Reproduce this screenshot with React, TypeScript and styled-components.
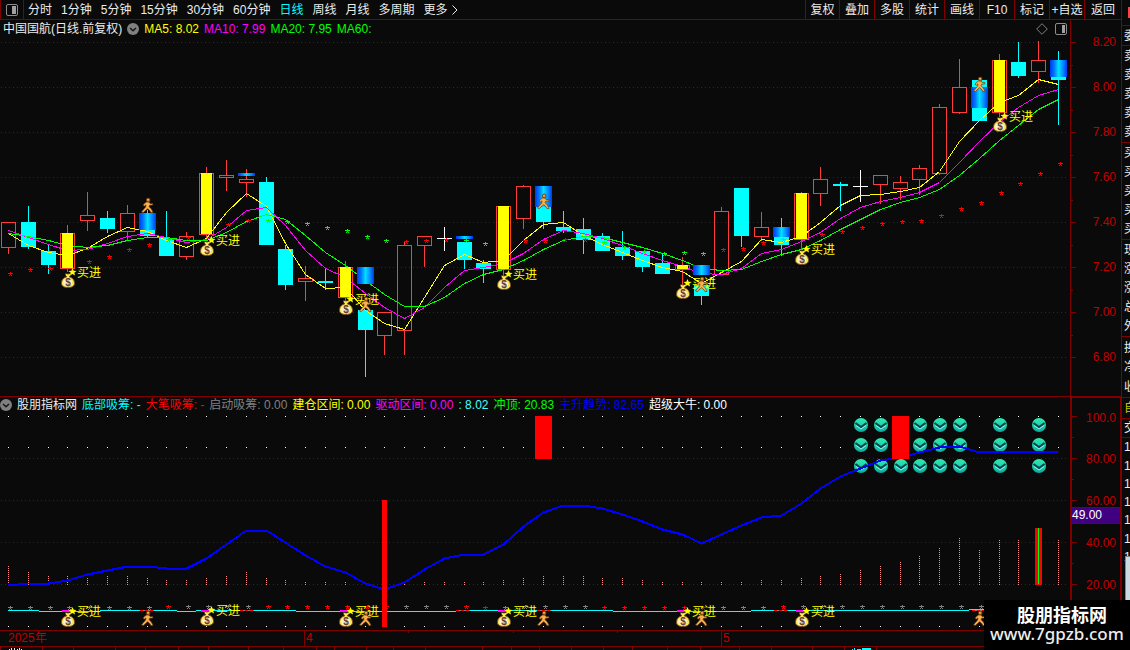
import React from "react";
import styled, { createGlobalStyle, css } from "styled-components";

const RULE = "#800000";
const BG = "#0a0a0a";

const Global = createGlobalStyle`
  * { box-sizing: border-box; }
  html, body { margin: 0; background: ${BG}; }
  body {
    font-family: "Liberation Sans", "Noto Sans CJK SC", sans-serif;
    font-size: 12px;
    color: #ececec;
  }
  svg { display: block; }
`;

/* ---------- layout ---------- */

const Page = styled.div`
  position: relative;
  display: flex;
  min-height: 100vh;
  overflow: hidden;
  background: ${BG};
`;

const Main = styled.main`
  flex: 1;
  min-width: 0;
  display: flex;
  flex-direction: column;
`;

const Toolbar = styled.header`
  display: flex;
  height: 20px;
  border-bottom: 1px solid ${RULE};
`;

const resetButton = css`
  padding: 0;
  border: 0;
  background: none;
  color: inherit;
  font: inherit;
  line-height: 18px;
  white-space: nowrap;
`;

const LayoutToggle = styled.button`
  ${resetButton}
  display: flex;
  align-items: center;
  justify-content: center;
  width: 24px;
  border-left: 1px solid ${RULE};
  border-right: 1px solid ${RULE};
`;

const Periods = styled.nav`
  flex: 1;
  display: flex;
  gap: 9px;
  padding-left: 4px;
`;

const PeriodButton = styled.button<{ $active?: boolean }>`
  ${resetButton}
  display: flex;
  align-items: center;
  gap: 4px;
  color: ${(p) => (p.$active ? "#00ffff" : "#ececec")};
`;

const Tools = styled.div`
  display: flex;
`;

const ToolButton = styled.button`
  ${resetButton}
  width: 35px;
  border-left: 1px solid ${RULE};
  &:first-child { width: 34px; }
  &:last-child { width: 37px; }
`;

const Pane = styled.section<{ $ruled?: boolean }>`
  display: flex;
  border-top: ${(p) => (p.$ruled ? `1px solid ${RULE}` : "0")};
`;

const Plot = styled.div`
  flex: 1;
  min-width: 0;
`;

const Legend = styled.div<{ $height: number; $indent?: number }>`
  display: flex;
  align-items: center;
  gap: 5px;
  height: ${(p) => p.$height}px;
  padding: 0 3px 0 ${(p) => p.$indent || 0}px;
  line-height: 16px;
  white-space: nowrap;
`;

const LegendItem = styled.span<{ $color: string }>`
  color: ${(p) => p.$color};
`;

const LegendTools = styled.div`
  display: flex;
  align-items: center;
  gap: 7px;
  margin-left: auto;
`;

const Drawing = styled.svg<{ $height: number }>`
  width: 100%;
  height: ${(p) => p.$height}px;
`;

const Axis = styled.aside<{ $boxed?: boolean }>`
  position: relative;
  display: flex;
  width: 51px;
  border-left: ${(p) => (p.$boxed ? 2 : 1)}px solid ${RULE};
  ${(p) => p.$boxed && css`
    border-top: 1px solid ${RULE};
    border-right: 1px solid ${RULE};
  `}
`;

const AxisLabels = styled.div<{ $boxed?: boolean }>`
  flex: 1;
  padding-right: ${(p) => (p.$boxed ? 4 : 5)}px;
  color: #c00000;
  text-align: right;
`;

const AxisLabel = styled.div<{ $height: number }>`
  height: ${(p) => p.$height}px;
  line-height: ${(p) => p.$height}px;
`;

const CurrentValue = styled.div`
  position: absolute;
  top: 109px;
  left: 0;
  right: 0;
  height: 17px;
  border-top: 1px solid ${RULE};
  border-bottom: 1px solid ${RULE};
  background: #400080;
  color: #ffffff;
  line-height: 15px;
`;

const DateRow = styled.div`
  display: grid;
  grid-template-columns: 304fr 417fr 400fr;
  height: 17px;
  border-top: 1px solid ${RULE};
  border-bottom: 1px solid ${RULE};
  color: #c00000;
  line-height: 15px;
`;

const Month = styled.div<{ $first?: boolean }>`
  position: relative;
  padding-left: ${(p) => (p.$first ? 8 : 1)}px;
  border-left: ${(p) => (p.$first ? "0" : `1px solid ${RULE}`)};
`;

const Weeks = styled.div`
  position: absolute;
  inset: 0 0 auto 0;
  display: flex;
  height: 2px;
`;

const Week = styled.span`
  flex: 1;
  & + & { border-left: 1px solid ${RULE}; }
`;

const TabStrip = styled.div`
  display: flex;
  flex: 1;
  min-height: 3px;
`;

const TabEdge = styled.span<{ $size: number }>`
  flex: ${(p) => p.$size} 0 0;
  border-left: 1px solid ${RULE};
`;

const Quotes = styled.aside`
  display: flex;
  flex-direction: column;
  width: 9px;
  overflow: hidden;
  border-left: 1px solid ${RULE};
`;

const QuoteGroup = styled.ul<{ $height: number; $color?: string }>`
  display: flex;
  flex-direction: column;
  justify-content: space-evenly;
  flex: none;
  height: ${(p) => p.$height}px;
  margin: 0;
  padding: 0 0 0 2px;
  border-bottom: 1px solid ${RULE};
  color: ${(p) => p.$color || "#ececec"};
  line-height: 18px;
  list-style: none;
  white-space: nowrap;
  &:last-of-type { border-bottom: 0; }
`;

const QuoteTop = styled.div`
  flex: none;
  height: 26px;
  padding: 7px 0 0 6px;
  border-bottom: 1px solid ${RULE};
`;

const RedMark = styled.div`
  height: 11px;
  background: #ff4040;
`;

const Thumb = styled.div`
  position: absolute;
  right: 0;
  top: 556px;
  width: 5px;
  height: 46px;
  border: 1px solid #7d8a92;
  border-right: 0;
  background: #cbdbe4;
`;

const Brand = styled.footer`
  position: absolute;
  right: 0;
  top: 600px;
  width: 146px;
  height: 50px;
  padding: 2px 0 0 10px;
  background: #000000;
  text-align: center;
  white-space: nowrap;
`;

const BrandName = styled.div`
  font-family: "Noto Sans CJK SC", sans-serif;
  font-size: 18px;
  font-weight: 700;
  line-height: 24px;
  color: #ffffff;
`;

const BrandLink = styled.a`
  display: block;
  margin-left: -4px;
  color: #ececec;
  font-family: "Noto Sans", sans-serif;
  font-size: 17px;
  font-weight: 500;
  line-height: 16px;
  text-align: left;
  text-decoration: none;
`;

/* ---------- data ---------- */

// centre column of each trading day
const cx = (i: number) => Math.floor(8.487 + 19.813 * i);

type Kind = "r" | "c" | "y" | "w";
type Candle = [Kind, number, number, number, number];

// kind, high, body top, body bottom, low
const candles: Candle[] = [
  ["r", 222, 222, 247, 254], ["c", 206, 222, 247, 249], ["c", 245, 251, 265, 274],
  ["y", 225, 233, 268, 272], ["r", 192, 215, 220, 231], ["c", 211, 218, 229, 233],
  ["r", 205, 213, 231, 240], ["c", 210, 213, 236, 238], ["c", 211, 238, 256, 256],
  ["r", 232, 236, 256, 260], ["y", 167, 173, 234, 240], ["r", 160, 175, 177, 191],
  ["r", 169, 179, 182, 197], ["c", 177, 182, 245, 245], ["c", 245, 249, 285, 290],
  ["r", 266, 278, 281, 301], ["c", 268, 281, 283, 290], ["y", 261, 267, 297, 301],
  ["c", 310, 310, 330, 377], ["r", 312, 312, 335, 355], ["r", 242, 245, 330, 355],
  ["r", 236, 236, 245, 267], ["w", 227, 238, 239, 251], ["c", 242, 242, 260, 269],
  ["c", 260, 263, 269, 283], ["y", 206, 206, 269, 276], ["r", 185, 186, 218, 229],
  ["c", 186, 186, 222, 229], ["c", 211, 227, 231, 233], ["c", 218, 229, 240, 254],
  ["c", 233, 236, 251, 251], ["c", 231, 247, 256, 260], ["c", 251, 251, 267, 272],
  ["c", 254, 263, 274, 274], ["y", 257, 265, 269, 286], ["c", 285, 285, 296, 305],
  ["r", 207, 211, 274, 274], ["c", 188, 188, 236, 247], ["r", 212, 227, 236, 241],
  ["c", 218, 227, 245, 256], ["y", 192, 193, 239, 250], ["r", 167, 179, 193, 206],
  ["c", 182, 184, 186, 211], ["w", 170, 186, 187, 202], ["r", 175, 175, 184, 204],
  ["r", 176, 182, 188, 200], ["r", 165, 168, 179, 195], ["r", 104, 107, 173, 175],
  ["r", 59, 87, 112, 114], ["c", 80, 80, 121, 121], ["y", 54, 60, 112, 117],
  ["c", 42, 62, 76, 78], ["r", 41, 60, 71, 83], ["c", 51, 60, 80, 125],
];

const blueBars: [number, number, number][] = [
  [7, 213, 230], [12, 173, 176], [18, 267, 284], [23, 236, 239], [27, 186, 207],
  [35, 265, 275], [39, 227, 237], [49, 87, 108], [53, 60, 77],
];

const ma5 = [233, 245, 252, 255, 248, 236, 227, 231, 240, 247, 238, 212, 193, 206, 243, 274, 288, 287, 310, 323, 329, 297, 265, 254, 262, 260, 240, 224, 222, 235, 244, 252, 260, 267, 271, 283, 272, 261, 239, 242, 236, 222, 205, 195, 194, 191, 187, 171, 141, 120, 102, 95, 79, 84];
const ma10 = [230, 237, 244, 250, 249, 243, 236, 233, 237, 242, 239, 227, 210, 207, 225, 250, 268, 277, 293, 307, 318, 307, 287, 270, 267, 263, 253, 239, 230, 233, 238, 245, 253, 260, 266, 273, 274, 268, 253, 249, 241, 232, 218, 207, 201, 197, 192, 182, 162, 141, 122, 107, 95, 89];
const ma20 = [233, 236, 240, 245, 247, 245, 240, 237, 237, 240, 240, 232, 221, 214, 219, 235, 252, 265, 280, 294, 306, 306, 297, 283, 274, 269, 260, 249, 240, 236, 237, 242, 247, 253, 260, 268, 270, 269, 261, 254, 249, 240, 229, 219, 209, 202, 197, 189, 175, 158, 140, 125, 109, 99];

// y of each trend star; 0 leaves the bar unmarked
const starY = [274, 270, 269, 0, 262, 257, 250, 245, 240, 238, 0, 225, 221, 221, 222, 224, 228, 231, 237, 241, 242, 241, 240, 241, 244, 0, 241, 241, 240, 240, 243, 248, 252, 254, 253, 254, 250, 249, 243, 240, 0, 235, 232, 228, 224, 222, 221, 216, 209, 203, 193, 184, 174, 164];
// days on which the trend turns down
const weakDays = [8, 13, 14, 15, 16, 17, 18, 19, 23, 24, 30, 31, 32, 33, 34, 35, 39];

const trend = [585, 583, 583, 580, 574, 570, 566, 566, 568, 568, 558, 544, 530, 530, 542, 555, 566, 572, 583, 589, 582, 569, 558, 554, 554, 544, 526, 512, 505, 505, 508, 514, 521, 529, 534, 543, 534, 525, 517, 515, 503, 488, 476, 468, 460, 457, 452, 447, 446, 452, 451, 451, 451, 452];
const volumeTop = [565, 571, 575, 575, 577, 576, 575, 577, 579, 579, 577, 575, 572, 577, 580, 581, 582, 582, 583, 0, 584, 582, 581, 581, 581, 579, 577, 576, 576, 576, 577, 578, 580, 581, 582, 582, 581, 581, 580, 580, 578, 575, 573, 570, 566, 562, 555, 547, 537, 549, 540, 540, 0, 540];

const buys: [number, number][] = [[3, 281], [10, 249], [17, 308], [25, 283], [34, 292], [40, 258], [50, 125]];
const exits: [number, number][] = [[7, 205], [18, 304], [27, 201], [35, 284], [49, 84]];

const baseline: [number, number, number][] = [
  [8, 39, 610], [39, 100, 611], [100, 177, 610], [177, 196, 611], [196, 296, 610],
  [296, 456, 611], [456, 613, 610], [613, 751, 611], [751, 969, 610], [969, 984, 609],
];
const dashes = [140, 240, 456, 537, 774, 972];

/* ---------- drawing parts ---------- */

const linePoints = (ys: number[]) => ys.map((y, i) => `${cx(i) + 0.5},${y + 0.5}`).join(" ");

const DottedRule = ({ y }: { y: number }) => (
  <line x1="1" x2="1067" y1={y + 0.5} y2={y + 0.5} stroke="#780808" strokeDasharray="1 3" shapeRendering="crispEdges" />
);

const Star = ({ x, y, color }: { x: number; y: number; color: string }) => (
  <path
    transform={`translate(${x} ${y})`}
    fill={color}
    shapeRendering="crispEdges"
    d="M0-2h1v1h2v1H1v1h1v1H1V1H0v1h-1V1h1V0h-2v-1h2z"
  />
);

const CandleBody = ({ i, candle }: { i: number; candle: Candle }) => {
  const [kind, high, top, bottom, low] = candle;
  const x = cx(i);
  const color = kind === "c" ? "#00ffff" : kind === "w" ? "#ffffff" : "#ff3c3c";
  return (
    <g shapeRendering="crispEdges">
      {high < top && <rect x={x} y={high} width="1" height={top - high} fill={color} />}
      {low > bottom && <rect x={x} y={bottom} width="1" height={low - bottom} fill={color} />}
      {kind === "c" || kind === "w" ? (
        <rect x={x - 7} y={top} width="15" height={bottom - top} fill={color} />
      ) : (
        <rect x={x - 6.5} y={top + 0.5} width="14" height={bottom - top} fill="none" stroke={color} />
      )}
    </g>
  );
};

const Buy = ({ i, y }: { i: number; y: number }) => (
  <g transform={`translate(${cx(i) + 1} ${y})`}>
    <path d="M-2.500-7h5l-1 3c4 1 5 4 5 6.500C6.500 5 4 6.500 0 6.500S-6.500 5-6.500 2.500C-6.500 0-5.500-3-1.500-4z" fill="#f7e65a" stroke="#7a4a1c" />
    <ellipse cx="-0.500" cy="1.500" rx="4.500" ry="4" fill="#fff3c8" />
    <path d="M-2.500-7.500 0-6l2.500-1.500L1.500-5h-3z" fill="#ffef50" />
    <text x="0" y="5" textAnchor="middle" fontSize="10" fontWeight="700" fill="#6b3a2a">$</text>
    <path d="M4.500-13 5.700-10.300 8.500-10 6.300-8.200 7-5.500 4.500-7 2-5.500 2.700-8.200 .5-10 3.300-10.300z" fill="#ffff00" />
    <text x="9" y="-4" fontSize="12" fill="#ffff00">买进</text>
  </g>
);

const Runner = ({ i, y }: { i: number; y: number }) => (
  <g transform={`translate(${cx(i) + 0.5} ${y + 0.5})`}>
    <path
      d="M-.8-3.600h2.300l1.300 1.800 2.300-.3.300 1.500-3.300.4-.5 1.400 2.200 2.200 1.800 3.400-2 .4-1.800-2.600L.2 3.200l-2.700 2.200-1.700 1.700-1.800-.7 1.800-2.200 2.400-2.600.2-2.200-1.500 1.200-1.400-.8 1.600-2z"
      fill="#f8b050"
      stroke="#6a3408"
      strokeWidth="0.700"
    />
    <circle cx="0.700" cy="-5.500" r="1.900" fill="#c87828" stroke="#6a3408" strokeWidth="0.700" />
    <circle cx="0.500" cy="-5.800" r="0.800" fill="#ffc870" />
  </g>
);

const Orb = ({ i, y }: { i: number; y: number }) => (
  <g transform={`translate(${cx(i) + 1} ${y})`}>
    <circle r="7" fill="url(#orb)" />
    <path d="M-5.500-2 0 2 5.500-2" fill="none" stroke="#064458" strokeWidth="2" />
    <path d="M-5 .5 0 4 5 .5" fill="none" stroke="#a0ece4" />
  </g>
);

const PanelIcon = ({ flip }: { flip?: boolean }) => (
  <svg width="12" height="12" viewBox="0 0 12 12" aria-hidden="true">
    <rect x="0.500" y="0.500" width="11" height="11" rx="1.500" fill="none" stroke="#8c8c8c" />
    <rect x={flip ? 7 : 6} y="2" width={flip ? 3 : 4} height="8" fill="#a0a0a0" />
  </svg>
);

const Chevron = () => (
  <svg width="12" height="12" viewBox="0 0 12 12" aria-hidden="true">
    <circle cx="6" cy="6" r="6" fill="#808080" />
    <path d="M3 5 6 7.800 9 5" fill="none" stroke="#151515" strokeWidth="1.500" />
  </svg>
);

const PriceChart = () => (
  <Drawing $height={358} viewBox="0 38 1070 358" role="img" aria-label="中国国航 日线">
    <defs>
      <linearGradient id="blue">
        <stop offset="0" stopColor="#0038f0" />
        <stop offset="0.250" stopColor="#0078ff" />
        <stop offset="0.500" stopColor="#00e0ff" />
        <stop offset="0.750" stopColor="#0090ff" />
        <stop offset="1" stopColor="#0038f0" />
      </linearGradient>
    </defs>
    {[42, 87, 132, 177, 222, 267, 312, 357].map((y) => <DottedRule key={y} y={y} />)}
    {candles.map((c, i) => <CandleBody key={i} i={i} candle={c} />)}
    <g fill="none" shapeRendering="crispEdges">
      <polyline points={linePoints(ma5)} stroke="#ffff00" />
      <polyline points={linePoints(ma10)} stroke="#ff00ff" />
      <polyline points={linePoints(ma20)} stroke="#00ff00" />
    </g>
    {starY.map((y, i) => y > 0 && (
      <Star key={i} x={cx(i) + 2} y={y} color={weakDays.includes(i) ? "#00ff00" : "#ff0000"} />
    ))}
    {candles.map(([kind, , top, bottom], i) => kind === "y" && (
      <rect key={i} x={cx(i) - 5} y={top} width="11" height={bottom - top} fill="#ffff00" shapeRendering="crispEdges" />
    ))}
    {blueBars.map(([i, top, bottom]) => (
      <rect key={i} x={cx(i) - 8} y={top} width="17" height={bottom - top} fill="url(#blue)" />
    ))}
    {buys.map(([i, y]) => <Buy key={i} i={i} y={y} />)}
    {exits.map(([i, y]) => <Runner key={i} i={i} y={y} />)}
  </Drawing>
);

const orbColumns = [43, 44, 46, 47, 48, 50, 52];

const IndicatorChart = () => (
  <Drawing $height={217} viewBox="0 413 1070 217" role="img" aria-label="股朋指标网">
    <defs>
      <linearGradient id="orb" x1="0" y1="0" x2="0" y2="1">
        <stop offset="0" stopColor="#30e8b0" />
        <stop offset="0.450" stopColor="#20d8a8" />
        <stop offset="1" stopColor="#08a8a0" />
      </linearGradient>
    </defs>
    {[458, 500, 542, 584].map((y) => <DottedRule key={y} y={y} />)}
    {candles.map((_, i) => (
      <g key={i} fill="#ffffff" shapeRendering="crispEdges">
        {[416, 447, 626].map((y) => <rect key={y} x={cx(i)} y={y} width="1" height="1" />)}
      </g>
    ))}
    {volumeTop.map((y, i) => y > 0 && (
      <line key={i} x1={cx(i) + 0.5} x2={cx(i) + 0.5} y1="585" y2={y} stroke="#ff8c8c" strokeDasharray="1 1" shapeRendering="crispEdges" />
    ))}
    {[425, 445].map((y) => orbColumns.map((i) => <Orb key={`${i}-${y}`} i={i} y={y} />))}
    {[...orbColumns, 45].map((i) => <Orb key={i} i={i} y={466} />)}
    <polyline points={linePoints(trend)} fill="none" stroke="#0000ff" strokeWidth="2" shapeRendering="crispEdges" />
    <g fill="#ff0000" shapeRendering="crispEdges">
      <rect x={cx(27) - 8} y="416" width="17" height="43" />
      <rect x={cx(45) - 8} y="416" width="17" height="43" />
      <rect x={cx(52) - 3} y="528" width="7" height="57" />
      <rect x={cx(52)} y="528" width="1" height="56" fill="#00ff00" />
    </g>
    {candles.map((_, i) => (
      <Star
        key={i}
        x={cx(i) + 2}
        y={i < 8 || i === 24 || i === 25 || (i > 29 && i < 39) ? 608 : 607}
        color={weakDays.includes(i) ? "#ff0000" : "#808080"}
      />
    ))}
    <g shapeRendering="crispEdges">
      {baseline.map(([from, to, y]) => <rect key={from} x={from} y={y} width={to - from} height="1" fill="#00ffff" />)}
      {dashes.map((x) => (
        <g key={x}>
          <rect x={x} y="610" width="14" height="1" fill="#808080" />
          <line x1={x} x2={x + 14} y1="610.500" y2="610.500" stroke="#ff0000" strokeDasharray="3 2" />
        </g>
      ))}
      {buys.slice(0, 6).map(([i]) => <rect key={i} x={cx(i) - 5} y="610" width="12" height="2" fill="#ff00ff" />)}
      <rect x={cx(19) - 2} y="500" width="5" height="127" fill="#ff0000" />
    </g>
    {buys.slice(0, 6).map(([i]) => <Buy key={i} i={i} y={i === 10 ? 619 : 620} />)}
    {exits.map(([i]) => <Runner key={i} i={i} y={618} />)}
  </Drawing>
);

const AxisTicks = ({ top, height, major, step, count }: { top: number; height: number; major: number; step: number; count: number }) => (
  <svg width="5" height={height} viewBox={`0 ${top} 5 ${height}`} shapeRendering="crispEdges" aria-hidden="true">
    {Array.from({ length: count }, (_, n) => (
      <g key={n} fill={RULE}>
        <rect y={major + n * step} width="5" height="1" />
        {n < count - 1 && <rect y={major + n * step + Math.ceil(step / 2)} width="2" height="1" />}
      </g>
    ))}
  </svg>
);

/* ---------- page ---------- */

const periods = ["分时", "1分钟", "5分钟", "15分钟", "30分钟", "60分钟", "日线", "周线", "月线", "多周期"];
const tools = ["复权", "叠加", "多股", "统计", "画线", "F10", "标记", "+自选", "返回"];
const averages: [string, string][] = [
  ["MA5: 8.02", "#ffff00"], ["MA10: 7.99", "#ff00ff"], ["MA20: 7.95", "#00ff00"], ["MA60:", "#00ff00"],
];
const readings: [string, string][] = [
  ["股朋指标网", "#ececec"], ["底部吸筹: -", "#00ffff"], ["大笔吸筹: -", "#ff0000"], ["启动吸筹: 0.00", "#808080"],
  ["建仓区间: 0.00", "#ffff00"], ["驱动区间: 0.00", "#ff00ff"], [": 8.02", "#40ffff"], ["冲顶: 20.83", "#00ff00"],
  ["主升趋势: 82.65", "#0000ff"], ["超级大牛: 0.00", "#ffffff"],
];
const quoteGroups: { rows: string[]; height: number; color?: string }[] = [
  { rows: ["委"], height: 20 },
  { rows: ["卖", "卖", "卖", "卖", "卖"], height: 97 },
  { rows: ["买", "买", "买", "买", "买"], height: 97 },
  { rows: ["现", "涨", "涨", "总", "外"], height: 97 },
  { rows: ["换", "净", "收"], height: 61 },
  { rows: ["自"], height: 21, color: "#c8c800" },
  { rows: ["交"], height: 19 },
  { rows: ["1", "1", "1", "1", "1", "1", "1"], height: 128 },
];
const tabEdges = [0, 42, 73, 115, 144, 177, 207, 247, 282, 315, 332, 364, 390, 422, 480, 508, 536, 568, 599, 628, 663, 696, 735, 766, 807, 839, 871, 1121];

export default function App() {
  return (
    <>
      <Global />
      <Page>
        <Main>
          <Toolbar>
            <LayoutToggle aria-label="布局"><PanelIcon /></LayoutToggle>
            <Periods>
              {periods.map((p) => <PeriodButton key={p} $active={p === "日线"}>{p}</PeriodButton>)}
              <PeriodButton>
                更多
                <svg width="6" height="10" viewBox="0 0 6 10" aria-hidden="true">
                  <path d="M.5.5 5 5 .5 9.500" fill="none" stroke="#ececec" />
                </svg>
              </PeriodButton>
            </Periods>
            <Tools>{tools.map((t) => <ToolButton key={t}>{t}</ToolButton>)}</Tools>
          </Toolbar>

          <Pane>
            <Plot>
              <Legend $height={18} $indent={3}>
                <LegendItem $color="#ececec">中国国航(日线.前复权)</LegendItem>
                <Chevron />
                {averages.map(([text, color]) => <LegendItem key={text} $color={color}>{text}</LegendItem>)}
                <LegendTools>
                  <svg width="12" height="12" viewBox="0 0 12 12" aria-hidden="true">
                    <path d="M6 .7 11.300 6 6 11.300.7 6z" fill="none" stroke="#808080" />
                  </svg>
                  <PanelIcon flip />
                </LegendTools>
              </Legend>
              <PriceChart />
            </Plot>
            <Axis>
              <AxisTicks top={20} height={376} major={42} step={45} count={8} />
              <AxisLabels>
                {["8.20", "8.00", "7.80", "7.60", "7.40", "7.20", "7.00", "6.80"].map((v) => (
                  <AxisLabel key={v} $height={45}>{v}</AxisLabel>
                ))}
              </AxisLabels>
            </Axis>
          </Pane>

          <Pane $ruled>
            <Plot>
              <Legend $height={16}>
                <Chevron />
                {readings.map(([text, color]) => <LegendItem key={text} $color={color}>{text}</LegendItem>)}
              </Legend>
              <IndicatorChart />
            </Plot>
            <Axis $boxed>
              <AxisTicks top={398} height={232} major={416} step={42} count={5} />
              <AxisLabels $boxed>
                {["100.0", "80.00", "60.00", "40.00", "20.00"].map((v, n) => (
                  <AxisLabel key={v} $height={n === 0 ? 40 : 42}>{v}</AxisLabel>
                ))}
              </AxisLabels>
              <CurrentValue>49.00</CurrentValue>
            </Axis>
          </Pane>

          <DateRow>
            <Month $first>2025年</Month>
            <Month>
              4
              <Weeks><Week /><Week /><Week /><Week /></Weeks>
            </Month>
            <Month>5</Month>
          </DateRow>
          <TabStrip>
            {tabEdges.slice(0, -1).map((x, n) => (
              <TabEdge key={x} $size={tabEdges[n + 1] - x}>
                {(x === 0 || x === 839) && (
                  <svg width="28" height="3" viewBox="0 0 28 3" shapeRendering="crispEdges" aria-hidden="true">
                    {x === 0 ? (
                      <path d="M8 2h1v1H8zM10 1h1v2h-1zM13 1h1v2h-1zM16 2h1v1h-1zM18 1h1v2h-1zM20 2h1v1h-1z" fill="#ececec" />
                    ) : (
                      <path d="M7 2h1v1H7zM9 1h1v2H9zM12 2h4v1h-4zM17 1h9v2h-9z" fill="#00ffff" />
                    )}
                  </svg>
                )}
              </TabEdge>
            ))}
          </TabStrip>
        </Main>

        <Quotes>
          <QuoteTop><RedMark /></QuoteTop>
          {quoteGroups.map((g, n) => (
            <QuoteGroup key={n} $height={g.height} $color={g.color}>
              {g.rows.map((r, k) => <li key={k}>{r}</li>)}
            </QuoteGroup>
          ))}
        </Quotes>
        <Thumb />

        <Brand>
          <BrandName>股朋指标网</BrandName>
          <BrandLink href="#">www.7gpzb.com</BrandLink>
        </Brand>
      </Page>
    </>
  );
}
